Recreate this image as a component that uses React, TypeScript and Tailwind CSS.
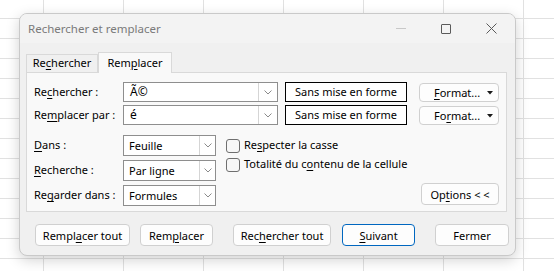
import React from "react";

function Chevron() {
    return (
        <svg width="8" height="5" viewBox="0 0 8 5" aria-hidden="true">
            <polyline points="0.5,0.5 4,4 7.5,0.5" fill="none" stroke="#8a8a8a" strokeWidth="1" />
        </svg>
    );
}

function U({ children }: { children: React.ReactNode }) {
    return <span className="underline underline-offset-[2px] decoration-1">{children}</span>;
}

function Combo({ value }: { value: string }) {
    return (
        <div className="flex w-[155px] h-[20px] bg-white border border-[#8e8e8e]">
            <div className="flex-1 pl-[6px] leading-[18px] text-[12px]">{value}</div>
            <div className="w-[19px] border-l border-[#d5d5d5] flex items-center justify-center">
                <Chevron />
            </div>
        </div>
    );
}

function Select({ value }: { value: string }) {
    return (
        <div className="flex w-[93px] h-[21px] bg-white border border-[#8e8e8e]">
            <div className="flex-1 pl-[5px] leading-[19px]">{value}</div>
            <div className="w-[16px] border-l border-[#d5d5d5] flex items-center justify-center">
                <Chevron />
            </div>
        </div>
    );
}

function FormatButton({ children }: { children: React.ReactNode }) {
    return (
        <div className="relative w-[80px] h-[19px] rounded-[4px] border border-[#d0d0d0] bg-[#fdfdfd] flex items-center pl-[14px] leading-none whitespace-nowrap">
            <span>{children}</span>
            <svg className="absolute right-[5px] top-[7px]" width="6" height="4" viewBox="0 0 6 4" aria-hidden="true">
                <polygon points="0,0 6,0 3,3.5" fill="#1a1a1a" />
            </svg>
        </div>
    );
}

function Checkbox({ children }: { children: React.ReactNode }) {
    return (
        <div className="flex items-center h-[19px] whitespace-nowrap">
            <div className="w-[14px] h-[14px] rounded-[3px] border border-[#6f6f6f] bg-[#f7f7f7] shrink-0" />
            <span className="ml-[4px]">{children}</span>
        </div>
    );
}

function Btn({ w, blue, children }: { w: string; blue?: boolean; children: React.ReactNode }) {
    return (
        <div
            className={`${w} h-[22px] rounded-[4px] bg-[#fdfdfd] flex items-center justify-center leading-none whitespace-nowrap ${
                blue ? "border border-[#0067c0]" : "border border-[#d0d0d0]"
            }`}
        >
            {children}
        </div>
    );
}

export default function App() {
    return (
        <div className="relative w-[554px] h-[271px] overflow-hidden bg-white bg-[linear-gradient(to_right,#e1e1e1_1px,transparent_1px),linear-gradient(to_bottom,#e1e1e1_1px,transparent_1px)] bg-[size:80px_20px] bg-[position:43px_18px] font-['Noto_Sans',sans-serif] text-[11px] text-black">
            <div className="absolute left-[19px] top-[13px] w-[497px] h-[243px] rounded-[8px] border border-[#c9c9c9] bg-[#f0f0f0] shadow-[0_4px_14px_rgba(0,0,0,0.18)] overflow-hidden flex flex-col">
                {/* title bar */}
                <div className="h-[29px] bg-[#f3f3f3] flex items-center pl-[8px] shrink-0">
                    <span className="text-[#7a7a7a] text-[11.5px]">Rechercher et remplacer</span>
                    <div className="ml-auto flex items-center">
                        <div className="w-[10px] h-px bg-[#c8c8c8]" />
                        <div className="ml-[35px] w-[10px] h-[10px] border border-[#5a5a5a] rounded-[1px]" />
                        <svg className="ml-[35px] mr-[18px]" width="11" height="11" viewBox="0 0 11 11" aria-hidden="true">
                            <path d="M0.5 0.5 L10.5 10.5 M10.5 0.5 L0.5 10.5" stroke="#5a5a5a" strokeWidth="1" />
                        </svg>
                    </div>
                </div>

                {/* tabs */}
                <div className="flex items-end pl-[6px] mt-[8px] h-[21px] shrink-0">
                    <div className="w-[72px] h-[18px] border border-b-0 border-[#d9d9d9] bg-[#f0f0f0] flex items-center justify-center">
                        Re<U>c</U>hercher
                    </div>
                    <div className="w-[74px] h-[21px] border border-b-0 border-[#d9d9d9] bg-[#f9f9f9] flex items-center justify-center -mb-px relative z-10">
                        Rem<U>p</U>lacer
                    </div>
                </div>

                {/* panel */}
                <div className="ml-[6px] w-[481px] h-[140px] border border-[#d9d9d9] bg-[#f9f9f9] pt-[9px] pl-[7px] pr-[7px] shrink-0">
                    <div className="flex items-center">
                        <div className="w-[89px]">
                            Re<U>c</U>hercher :
                        </div>
                        <Combo value="Ã©" />
                        <div className="ml-[7px] w-[122px] h-[20px] border border-black bg-white flex items-center justify-center">
                            Sans mise en forme
                        </div>
                        <div className="ml-[12px]">
                            <FormatButton>
                                <U>F</U>ormat...
                            </FormatButton>
                        </div>
                    </div>
                    <div className="flex items-center mt-[3px]">
                        <div className="w-[89px]">
                            Re<U>m</U>placer par :
                        </div>
                        <Combo value="é" />
                        <div className="ml-[7px] w-[122px] h-[20px] border border-black bg-white flex items-center justify-center">
                            Sans mise en forme
                        </div>
                        <div className="ml-[12px]">
                            <FormatButton>
                                Fo<U>r</U>mat...
                            </FormatButton>
                        </div>
                    </div>

                    <div className="flex mt-[10px]">
                        <div className="flex flex-col gap-[4px]">
                            <div className="flex items-center">
                                <div className="w-[89px]">
                                    <U>D</U>ans :
                                </div>
                                <Select value="Feuille" />
                            </div>
                            <div className="flex items-center">
                                <div className="w-[89px]">
                                    <U>R</U>echerche :
                                </div>
                                <Select value="Par ligne" />
                            </div>
                            <div className="flex items-center">
                                <div className="w-[89px]">
                                    Re<U>g</U>arder dans :
                                </div>
                                <Select value="Formules" />
                            </div>
                        </div>
                        <div className="ml-[10px] flex flex-col pt-[1px]">
                            <Checkbox>
                                Re<U>s</U>pecter la casse
                            </Checkbox>
                            <Checkbox>
                                Totalité du c<U>o</U>ntenu de la cellule
                            </Checkbox>
                        </div>
                        <div className="ml-auto self-end mb-[1px]">
                            <Btn w="w-[78px]">
                                Op<U>t</U>ions &lt; &lt;
                            </Btn>
                        </div>
                    </div>
                </div>

                {/* bottom buttons */}
                <div className="flex items-center pl-[15px] mt-[12px]">
                    <Btn w="w-[95px]">
                        Rempl<U>a</U>cer tout
                    </Btn>
                    <div className="ml-[10px]">
                        <Btn w="w-[73px]">
                            Rem<U>p</U>lacer
                        </Btn>
                    </div>
                    <div className="ml-[20px]">
                        <Btn w="w-[98px]">
                            Rec<U>h</U>ercher tout
                        </Btn>
                    </div>
                    <div className="ml-[11px]">
                        <Btn w="w-[73px]" blue>
                            <U>S</U>uivant
                        </Btn>
                    </div>
                    <div className="ml-[20px]">
                        <Btn w="w-[74px]">Fermer</Btn>
                    </div>
                </div>
            </div>
        </div>
    );
}
